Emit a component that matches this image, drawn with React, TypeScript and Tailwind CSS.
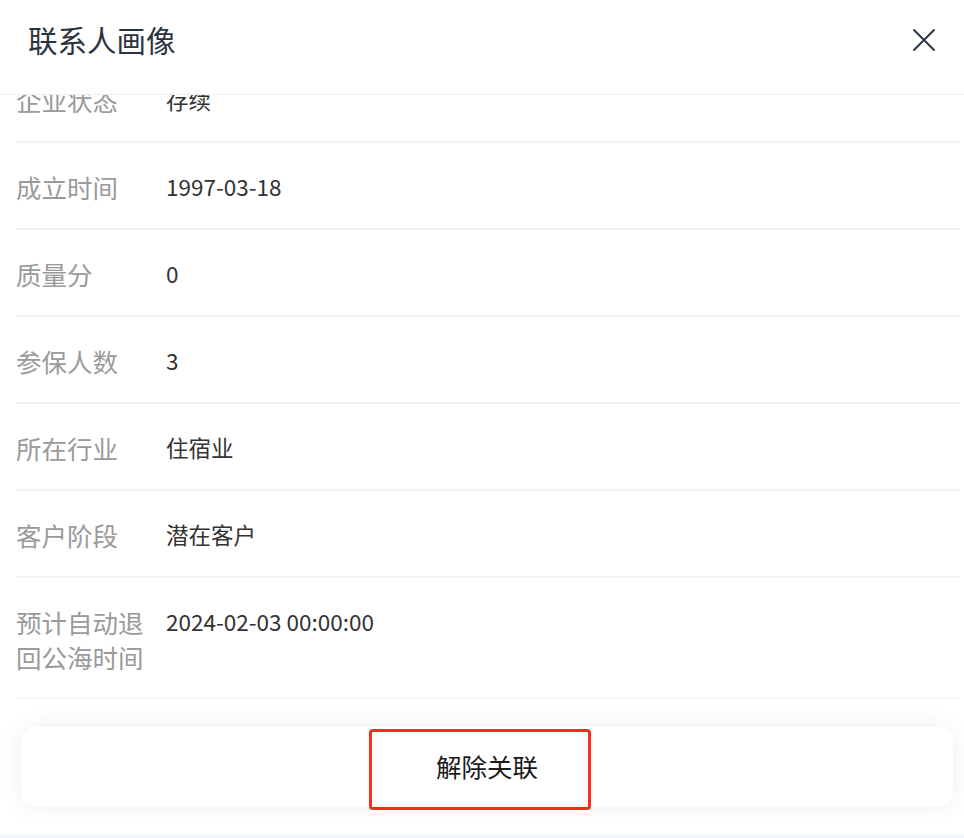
const rows = [
  { label: '企业状态', value: '存续' },
  { label: '成立时间', value: '1997-03-18' },
  { label: '质量分', value: '0' },
  { label: '参保人数', value: '3' },
  { label: '所在行业', value: '住宿业' },
  { label: '客户阶段', value: '潜在客户' },
  { label: '预计自动退回公海时间', value: '2024-02-03 00:00:00' },
];

const font = { fontFamily: '"Noto Sans CJK SC", "Noto Sans", sans-serif' };

function CloseIcon() {
  return (
    <svg
      width="24"
      height="24"
      viewBox="0 0 24 24"
      fill="none"
      stroke="#2d3748"
      strokeWidth="2"
      strokeLinecap="round"
    >
      <path d="M2 2 L22 22 M22 2 L2 22" />
    </svg>
  );
}

export default function App() {
  return (
    <div
      style={font}
      className="flex h-[838px] w-[964px] flex-col overflow-hidden bg-white"
    >
      {/* header */}
      <div className="flex h-[95px] shrink-0 items-center justify-between border-b border-[#eeeeee] pb-[14px] pl-[28px] pr-[28px]">
        <h1 className="text-[29.5px] font-normal leading-none text-[#2b3340]">
          联系人画像
        </h1>
        <CloseIcon />
      </div>

      {/* scrolled list */}
      <div className="flex-1 overflow-hidden">
        <div className="-mt-[39px] pl-[16px] pr-[4px]">
          {rows.map((row) => (
            <div
              key={row.label}
              className="flex items-start border-b-2 border-[#f3f3f3] pb-[24px] pt-[26px]"
            >
              <span className="w-[130px] shrink-0 text-[25.5px] leading-[35px] text-[#9a9a9a]">
                {row.label}
              </span>
              <span className="ml-[20px] text-[22.5px] leading-[35px] text-[#333333]">
                {row.value}
              </span>
            </div>
          ))}
        </div>
      </div>

      {/* bottom action */}
      <div className="shrink-0 pb-[29px] pl-[21px] pr-[11px] pt-[28px]">
        <div className="relative flex h-[79px] items-center justify-center rounded-[14px] bg-white shadow-[0_0_24px_rgba(0,0,0,0.07)]">
          <span className="text-[25.5px] text-[#1a1a1a]">解除关联</span>
          <div className="absolute left-[348px] top-[2px] h-[81px] w-[222px] rounded-[4px] border-[3px] border-[#ff2a1f]" />
        </div>
      </div>
      <div className="h-[3px] shrink-0 bg-[#f1f6fc]" />
    </div>
  );
}
